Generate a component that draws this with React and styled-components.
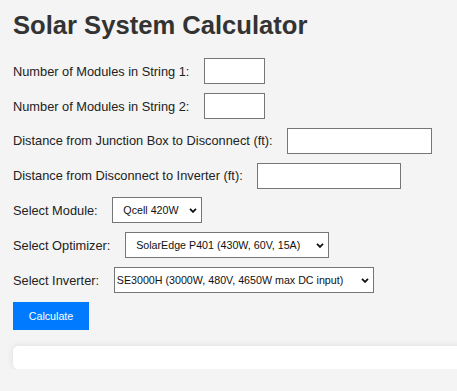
import styled, { createGlobalStyle } from "styled-components";

const GlobalStyle = createGlobalStyle`
    html, body {
        margin: 0;
        padding: 0;
        background: #f4f4f4;
        overflow: hidden;
    }
    body {
        font-family: "Liberation Sans", Arial, sans-serif;
    }
`;

const Page = styled.main`
    padding: 10.7px 0 0 13px;
    color: #333;
`;

const Title = styled.h1`
    margin: 0 0 18.2px;
    font-size: 25.6px;
    font-weight: bold;
    color: #333;
    line-height: 29.4px;
`;

const Row = styled.div`
    display: flex;
    align-items: center;
    height: 26px;
    margin-bottom: 8.8px;
`;

const Label = styled.label`
    font-size: 12.8px;
    color: #222;
    margin-right: 14.7px;
    white-space: nowrap;
`;

const Input = styled.input`
    box-sizing: border-box;
    width: ${(props) => props.$width}px;
    height: 26px;
    margin: 0;
    border: 1px solid #767676;
    border-radius: 0;
    background: #fff;
    font-family: inherit;
    font-size: 10.7px;
    padding: 0 4px;
`;

const SelectWrap = styled.div`
    position: relative;
    display: inline-flex;
`;

const Select = styled.select`
    appearance: none;
    box-sizing: border-box;
    width: ${(props) => props.$width}px;
    height: 26px;
    margin: 0;
    padding: 0 0 0 ${(props) => props.$pad}px;
    border: 1px solid #767676;
    border-radius: 0;
    background: #fff;
    color: #111;
    font-family: "Liberation Sans", Arial, sans-serif;
    font-size: 10.7px;
`;

const Chevron = styled.svg`
    position: absolute;
    right: 5px;
    top: 10.5px;
    pointer-events: none;
`;

const Button = styled.button`
    display: block;
    box-sizing: border-box;
    width: 76px;
    height: 28px;
    margin: 0 0 16px;
    border: none;
    border-radius: 0;
    background: #007bff;
    color: #fff;
    font-family: "Liberation Sans", Arial, sans-serif;
    font-size: 10.7px;
    padding: 0;
`;

const ResultBox = styled.div`
    width: 520px;
    height: 23.5px;
    background: #fff;
    border-radius: 5px;
    box-shadow: 0 0 7px rgba(0, 0, 0, 0.1);
`;

function Arrow() {
    return (
        <Chevron width="8" height="5" viewBox="0 0 8 5">
            <polyline
                points="1,0.9 4,3.9 7,0.9"
                fill="none"
                stroke="#111"
                strokeWidth="1.8"
            />
        </Chevron>
    );
}

function Dropdown({ width, pad, options }) {
    return (
        <SelectWrap>
            <Select $width={width} $pad={pad} defaultValue={options[0]}>
                {options.map((o) => (
                    <option key={o}>{o}</option>
                ))}
            </Select>
            <Arrow />
        </SelectWrap>
    );
}

function App() {
    return (
        <Page>
            <GlobalStyle />
            <Title>Solar System Calculator</Title>
            <Row>
                <Label>Number of Modules in String 1:</Label>
                <Input type="text" $width={61} />
            </Row>
            <Row>
                <Label>Number of Modules in String 2:</Label>
                <Input type="text" $width={61} />
            </Row>
            <Row>
                <Label>Distance from Junction Box to Disconnect (ft):</Label>
                <Input type="text" $width={145} />
            </Row>
            <Row>
                <Label>Distance from Disconnect to Inverter (ft):</Label>
                <Input type="text" $width={144} />
            </Row>
            <Row>
                <Label>Select Module:</Label>
                <Dropdown width={90} pad={10} options={["Qcell 420W"]} />
            </Row>
            <Row>
                <Label>Select Optimizer:</Label>
                <Dropdown
                    width={204}
                    pad={10}
                    options={["SolarEdge P401 (430W, 60V, 15A)"]}
                />
            </Row>
            <Row>
                <Label>Select Inverter:</Label>
                <Dropdown
                    width={260}
                    pad={2}
                    options={["SE3000H (3000W, 480V, 4650W max DC input)"]}
                />
            </Row>
            <Button>Calculate</Button>
            <ResultBox />
        </Page>
    );
}

export default App;
